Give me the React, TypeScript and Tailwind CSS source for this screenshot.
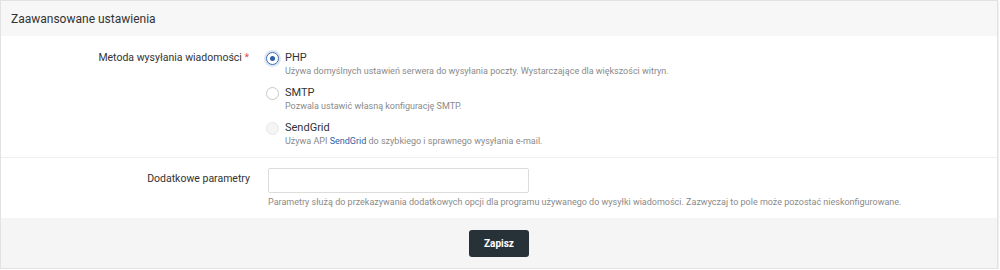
import React from "react";

function Radio({ checked, disabled }: { checked?: boolean; disabled?: boolean }) {
  if (checked) {
    return (
      <span className="mt-[1px] flex h-[13px] w-[13px] shrink-0 items-center justify-center rounded-full border border-[#3b6fb6] bg-white shadow-[0_0_0_2px_rgba(59,111,182,0.18)]">
        <span className="h-[5px] w-[5px] rounded-full bg-[#2f5fa5]" />
      </span>
    );
  }
  return (
    <span
      className={
        "mt-[1px] block h-[13px] w-[13px] shrink-0 rounded-full border " +
        (disabled ? "border-[#e6e6e6] bg-[#f5f5f5]" : "border-[#c8c8c8] bg-white")
      }
    />
  );
}

function Option({
  title,
  desc,
  checked,
  disabled,
}: {
  title: string;
  desc: React.ReactNode;
  checked?: boolean;
  disabled?: boolean;
}) {
  return (
    <div className="flex gap-[6px]">
      <Radio checked={checked} disabled={disabled} />
      <div className="flex flex-col">
        <span className="text-[11px] leading-[14px] text-[#333]">{title}</span>
        <span className="text-[9px] leading-[13px] text-[#8a8a8a]">{desc}</span>
      </div>
    </div>
  );
}

export default function App() {
  return (
    <div
      className="w-[998px] h-[269px] border border-[#e2e2e2] bg-white shadow-[1px_1px_1px_rgba(0,0,0,0.06)] flex flex-col overflow-hidden"
      style={{ fontFamily: "Roboto, 'Liberation Sans', sans-serif" }}
    >
      <div className="h-[35px] shrink-0 bg-[#f7f7f7] px-[10px] flex items-center text-[12px] text-[#333]">
        Zaawansowane ustawienia
      </div>

      <div className="flex border-b border-[#efefef] pt-[15px] pb-[9px]">
        <div className="w-[249px] shrink-0 text-right text-[10.5px] leading-[14px] text-[#333] pr-[1px]">
          Metoda wysyłania wiadomości <span className="text-[#d9534f]">*</span>
        </div>
        <div className="ml-[16px] flex flex-col gap-[8px]">
          <Option
            checked
            title="PHP"
            desc="Używa domyślnych ustawień serwera do wysyłania poczty. Wystarczające dla większości witryn."
          />
          <Option title="SMTP" desc="Pozwala ustawić własną konfigurację SMTP." />
          <Option
            disabled
            title="SendGrid"
            desc={
              <>
                Używa API <span className="text-[#2f5fa5]">SendGrid</span> do szybkiego i sprawnego wysyłania e-mail.
              </>
            }
          />
        </div>
      </div>

      <div className="flex pt-[10px] pb-[10px]">
        <div className="w-[249px] shrink-0 text-right text-[10.5px] leading-[14px] text-[#333] pt-[4px]">
          Dodatkowe parametry
        </div>
        <div className="ml-[18px] flex flex-col">
          <input
            type="text"
            className="h-[25px] w-[261px] rounded-[2px] border border-[#dcdcdc] bg-white px-2 text-[12px] outline-none"
          />
          <span className="mt-[3px] text-[9px] leading-[12px] text-[#8a8a8a]">
            Parametry służą do przekazywania dodatkowych opcji dla programu używanego do wysyłki wiadomości. Zazwyczaj to pole może pozostać nieskonfigurowane.
          </span>
        </div>
      </div>

      <div className="flex-1 bg-[#f5f5f5] flex justify-center pt-[12px]">
        <button className="h-[27px] w-[60px] rounded-[3px] bg-[#263238] text-[10px] font-bold text-white">
          Zapisz
        </button>
      </div>
    </div>
  );
}
